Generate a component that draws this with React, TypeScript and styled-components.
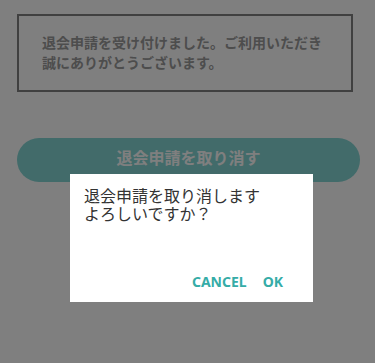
import styled, { createGlobalStyle } from "styled-components";

const GlobalStyle = createGlobalStyle`
  html, body {
    margin: 0;
    padding: 0;
    background: #ffffff;
    font-family: "Noto Sans", "Noto Sans CJK JP", sans-serif;
  }
`;

const Page = styled.main`
  display: flex;
  flex-direction: column;
  align-items: flex-start;
  gap: 46px;
  padding: 14px 0 0 17px;
  min-height: 363px;
  box-sizing: border-box;
`;

const Notice = styled.section`
  width: 336px;
  height: 78px;
  box-sizing: border-box;
  border: 2px solid #808080;
  padding: 0 20px 0 23px;
  display: flex;
  align-items: center;

  p {
    margin: 0;
    font-size: 14px;
    line-height: 20px;
    font-weight: 700;
    color: #9a9a9a;
  }
`;

const CancelRequestButton = styled.button`
  width: 343px;
  height: 44px;
  border: none;
  border-radius: 22px;
  background: #84d6d4;
  color: #ffffff;
  font-family: "Noto Sans", "Noto Sans CJK JP", sans-serif;
  font-size: 16px;
  font-weight: 700;
  padding: 0 0 6px;
`;

const Overlay = styled.div`
  position: fixed;
  inset: 0;
  background: rgba(0, 0, 0, 0.5);
  display: flex;
  align-items: flex-start;
  padding: 174px 0 0 70px;
  box-sizing: border-box;
`;

const Dialog = styled.div`
  width: 243px;
  height: 128px;
  background: #ffffff;
  display: flex;
  flex-direction: column;
  justify-content: space-between;
  box-sizing: border-box;
  padding: 13px 30px 10px 14px;
`;

const Message = styled.p`
  margin: 0;
  font-size: 16px;
  line-height: 18px;
  color: #333333;
`;

const Actions = styled.div`
  display: flex;
  justify-content: flex-end;
  gap: 16px;
`;

const ActionButton = styled.button`
  border: none;
  background: none;
  padding: 0;
  color: #35aca7;
  font-family: "Noto Sans", "Noto Sans CJK JP", sans-serif;
  font-size: 14px;
  font-weight: 700;
  line-height: 20px;
`;

export default function App() {
  return (
    <>
      <GlobalStyle />
      <Page>
        <Notice>
          <p>
            退会申請を受け付けました。ご利用いただき
            <br />
            誠にありがとうございます。
          </p>
        </Notice>
        <CancelRequestButton>退会申請を取り消す</CancelRequestButton>
      </Page>
      <Overlay>
        <Dialog role="dialog">
          <Message>
            退会申請を取り消します
            <br />
            よろしいですか？
          </Message>
          <Actions>
            <ActionButton>CANCEL</ActionButton>
            <ActionButton>OK</ActionButton>
          </Actions>
        </Dialog>
      </Overlay>
    </>
  );
}
